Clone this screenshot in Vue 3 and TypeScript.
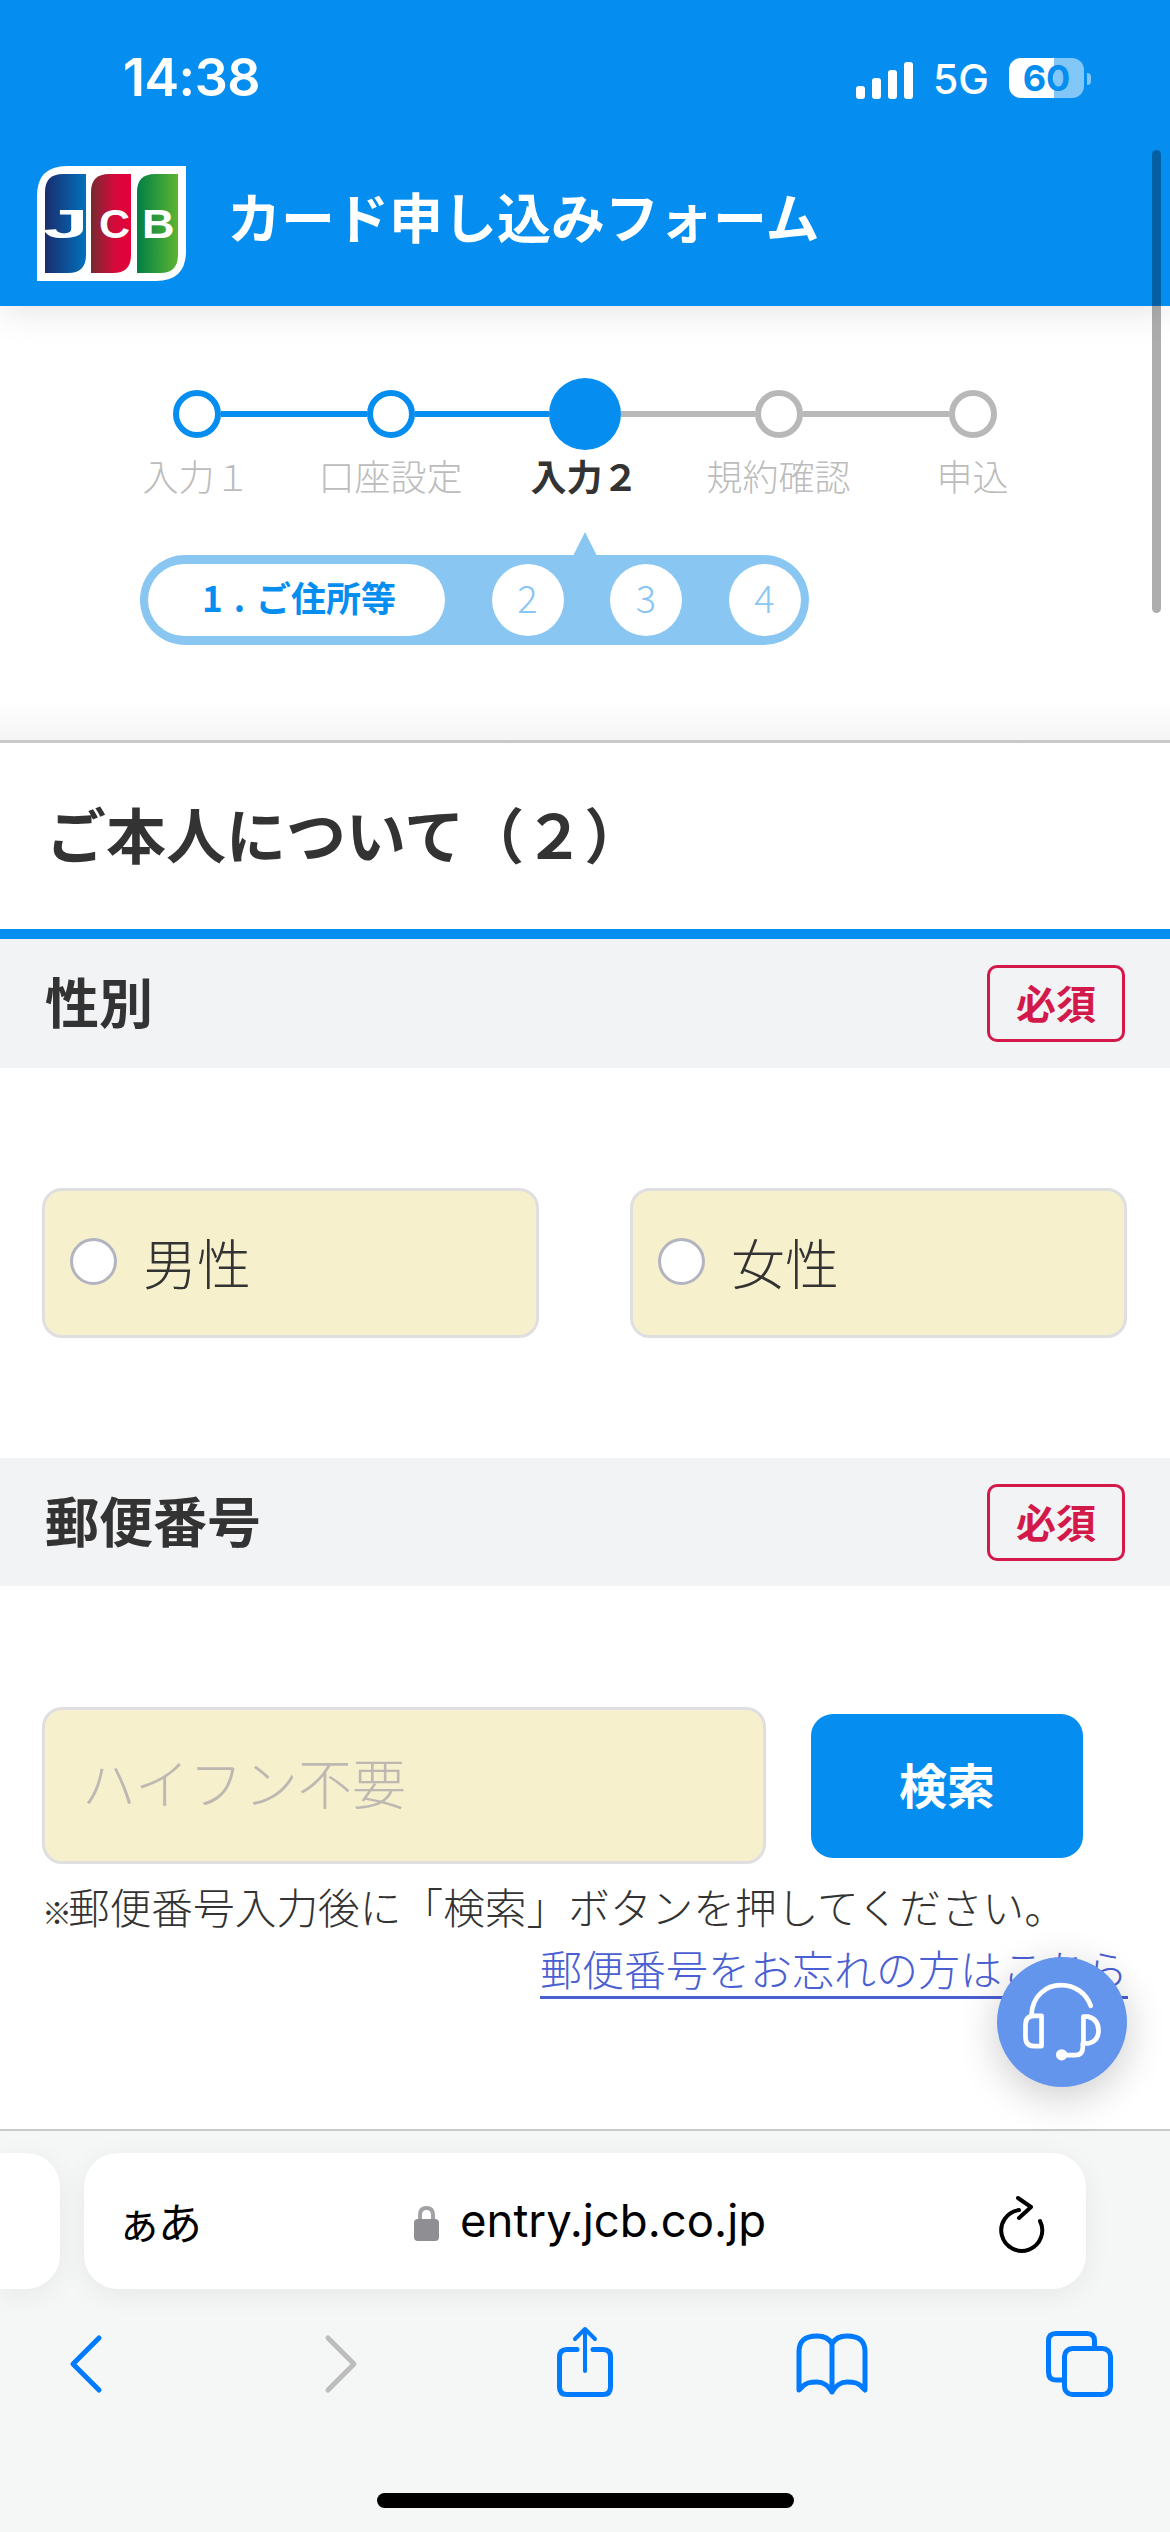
<script setup lang="ts">
interface Step { label: string; state: 'done' | 'current' | 'todo' }
const steps: Step[] = [
  { label: '入力１', state: 'done' },
  { label: '口座設定', state: 'done' },
  { label: '入力２', state: 'current' },
  { label: '規約確認', state: 'todo' },
  { label: '申込', state: 'todo' },
]
const signalBars = [13, 21, 29, 37]
</script>

<template>
  <div class="phone">
    <header class="top">
      <div class="status">
        <span class="time">14:38</span>
        <div class="status-right">
          <div class="signal">
            <i v-for="h in signalBars" :key="h" :style="{ height: h + 'px' }"></i>
          </div>
          <span class="net">5G</span>
          <div class="battery"><span>60</span></div>
          <i class="tip"></i>
        </div>
      </div>
      <div class="brand">
        <svg class="jcb" width="149" height="115" viewBox="0 0 149 115">
          <defs>
            <linearGradient id="gb" x1="0" x2="1" y1="0" y2="0"><stop offset="0" stop-color="#1b2c6e"/><stop offset="1" stop-color="#0071bc"/></linearGradient>
            <linearGradient id="gr" x1="0" x2="1" y1="0" y2="0"><stop offset="0" stop-color="#752b31"/><stop offset=".6" stop-color="#d6093b"/><stop offset="1" stop-color="#e4003a"/></linearGradient>
            <linearGradient id="gg" x1="0" x2="1" y1="0" y2="0"><stop offset="0" stop-color="#007f45"/><stop offset="1" stop-color="#5cb531"/></linearGradient>
          </defs>
          <path d="M30 0H149V85Q149 115 119 115H0V30Q0 0 30 0Z" fill="#fff"/>
          <path d="M26 8H49V89Q49 107 31 107H8V26Q8 8 26 8Z" fill="url(#gb)"/>
          <path d="M72 8H94V89Q94 107 76 107H54V26Q54 8 72 8Z" fill="url(#gr)"/>
          <path d="M118 8H141V89Q141 107 123 107H100V26Q100 8 118 8Z" fill="url(#gg)"/>
          <text class="jcb-t" transform="translate(6 72) scale(2 1)">J</text>
          <text class="jcb-t" transform="translate(62 72) scale(1.05 1)">C</text>
          <text class="jcb-t" transform="translate(105 72) scale(1.1 1)">B</text>
        </svg>
        <h1 class="title">カード申し込みフォーム</h1>
      </div>
    </header>

    <main class="main">
      <section class="progress">
        <ol class="steps">
          <li v-for="(s, i) in steps" :key="s.label" class="step" :class="s.state">
            <div class="track">
              <span class="seg" :class="{ none: i === 0, on: i <= 2 }"></span>
              <span class="dot"></span>
              <span class="seg" :class="{ none: i === steps.length - 1, on: i < 2 }"></span>
            </div>
            <span class="step-label">{{ s.label }}</span>
          </li>
        </ol>
        <div class="sub">
          <span class="sub-active">1 . ご住所等</span>
          <span class="sub-num">2</span>
          <span class="sub-num">3</span>
          <span class="sub-num">4</span>
        </div>
      </section>

      <h2 class="heading">ご本人について（２）</h2>

      <div class="field-head">
        <span class="field-name">性別</span>
        <em class="req">必須</em>
      </div>
      <div class="options">
        <label class="option"><span class="radio"></span>男性</label>
        <label class="option"><span class="radio"></span>女性</label>
      </div>

      <div class="field-head second">
        <span class="field-name">郵便番号</span>
        <em class="req">必須</em>
      </div>
      <div class="postal">
        <div class="postal-row">
          <input class="zip" type="text" placeholder="ハイフン不要" />
          <button class="search" type="button">検索</button>
        </div>
        <p class="note"><span class="mark">※</span>郵便番号入力後に「検索」ボタンを押してください。</p>
        <p class="link-row"><a class="link">郵便番号をお忘れの方はこちら</a></p>
      </div>

      <button class="fab" type="button" aria-label="チャット">
        <svg width="130" height="130" viewBox="112 52 388 388" fill="none" stroke="#fff" stroke-width="14" stroke-linecap="round" stroke-linejoin="round">
          <path d="M215 224C218 168 258 136 303 136C345 136 378 160 392 198"/>
          <path d="M245 228H222Q197 228 197 256V290Q197 318 222 318H245Z"/>
          <path d="M370 230H384Q415 238 415 272Q415 304 384 310H370Z"/>
          <path d="M368 310V322Q368 345 345 345H305"/>
          <circle cx="305" cy="344" r="17" fill="#fff" stroke="none"/>
        </svg>
      </button>
    </main>

    <footer class="toolbar">
      <div class="url-row">
        <div class="stub"></div>
        <div class="url-bar">
          <span class="aa">ぁあ</span>
          <svg class="lock" width="25" height="36" viewBox="0 0 25 36">
            <path d="M6 16V10Q6 3 12.500 3Q19 3 19 10V16" fill="none" stroke="#a2a2a6" stroke-width="4"/>
            <rect x="0" y="14" width="25" height="22" rx="4" fill="#8e8e93"/>
          </svg>
          <span class="url">entry.jcb.co.jp</span>
          <svg class="reload" width="50" height="60" viewBox="0 0 50 60" fill="none" stroke="#000" stroke-width="4" stroke-linecap="round" stroke-linejoin="round">
            <path d="M24 17A20.500 20.500 0 1 0 45 28"/>
            <path d="M23 5L36 14L24 25"/>
          </svg>
        </div>
      </div>
      <nav class="nav">
        <svg width="120" height="80" viewBox="0 0 120 80" fill="none" stroke="#007aff" stroke-width="5" stroke-linecap="round" stroke-linejoin="round"><path d="M70 16L44 42L70 68"/></svg>
        <svg width="120" height="80" viewBox="0 0 120 80" fill="none" stroke="#bdbdbd" stroke-width="5" stroke-linecap="round" stroke-linejoin="round"><path d="M51 16L77 42L51 68"/></svg>
        <svg width="120" height="80" viewBox="0 0 120 80" fill="none" stroke="#007aff" stroke-width="5" stroke-linecap="round" stroke-linejoin="round">
          <path d="M52 27.500H42Q34.500 27.500 34.500 35V65Q34.500 72.500 42 72.500H78Q85.500 72.500 85.500 65V35Q85.500 27.500 78 27.500H68"/>
          <path d="M60 7V49M50 17L60 7L70 17" stroke-width="4"/>
        </svg>
        <svg width="120" height="80" viewBox="0 0 120 80" fill="none" stroke="#007aff" stroke-width="5" stroke-linecap="round" stroke-linejoin="round">
          <path d="M59 22C56 16 50 14 44 14C33 14 26 18 26 30V68C32 60 38 60 44 60C50 60 56 64 59 70C62 64 68 60 74 60C80 60 86 60 92 68V30C92 18 85 14 74 14C68 14 62 16 59 22V70"/>
        </svg>
        <svg width="120" height="80" viewBox="0 0 120 80" fill="none" stroke="#007aff" stroke-width="5" stroke-linecap="round" stroke-linejoin="round">
          <rect x="43.500" y="26.500" width="46" height="46" rx="8"/>
          <path d="M41 58H35Q27.500 58 27.500 50V19Q27.500 11.500 35 11.500H66Q73.500 11.500 73.500 19V25"/>
        </svg>
      </nav>
      <div class="home"></div>
    </footer>

    <div class="scrollbar"></div>
  </div>
</template>

<style>
html, body { margin: 0; padding: 0; background: #fff; }
</style>

<style scoped>
* { box-sizing: border-box; }
.phone {
  position: relative;
  width: 1170px;
  height: 2532px;
  overflow: hidden;
  display: flex;
  flex-direction: column;
  background: #fff;
  color: #333;
  font-family: "Noto Sans CJK JP", "Noto Sans", sans-serif;
}

/* top */
.top {
  position: relative;
  z-index: 2;
  height: 306px;
  flex: none;
  background: #058eef;
  color: #fff;
  box-shadow: 0 2px 36px rgba(0, 0, 0, .13);
}
.status {
  height: 150px;
  padding: 50px 79px 0 123px;
  display: flex;
  justify-content: space-between;
  align-items: flex-start;
}
.time {
  font: 600 52px/56px Inter, "Liberation Sans", sans-serif;
  letter-spacing: -0.5px;
}
.status-right { display: flex; align-items: center; height: 56px; }
.signal { display: flex; align-items: flex-end; gap: 6.500px; height: 37px; margin-top: 4px; }
.signal i { display: block; width: 9.500px; background: #fff; border-radius: 3px; }
.net {
  font: 500 41px/56px Inter, "Liberation Sans", sans-serif;
  margin-left: 20px;
  margin-top: 2px;
}
.battery {
  width: 75px;
  height: 40px;
  margin-left: 20px;
  border-radius: 12px;
  background: linear-gradient(90deg, #fff 0 60%, rgba(255, 255, 255, .5) 60% 100%);
  color: #058eef;
  display: flex;
  align-items: center;
  justify-content: center;
  font: 700 36px/40px Inter, "Liberation Sans", sans-serif;
}
.tip {
  display: block;
  width: 4px;
  height: 12px;
  margin-left: 3px;
  margin-top: 1px;
  border-radius: 0 6px 6px 0;
  background: rgba(255, 255, 255, .5);
}
.brand { display: flex; align-items: flex-start; padding: 16px 0 0 37px; gap: 41px; }
.jcb { display: block; flex: none; }
.jcb-t { font: 700 41px "Liberation Sans", sans-serif; fill: #fff; }
.title {
  margin: 0;
  font-size: 54px;
  line-height: 76px;
  font-weight: 700;
  padding-top: 12px;
}

/* progress */
.main { position: relative; flex: 1; min-height: 0; }
.progress {
  height: 437px;
  padding: 72px 0 0 99.500px;
  border-bottom: 3px solid #c9c9c9;
  background: linear-gradient(#fff 0 396px, #f5f5f5 100%);
}
.steps {
  list-style: none;
  margin: 0;
  padding: 0;
  display: flex;
}
.step { width: 194px; display: flex; flex-direction: column; align-items: center; }
.track { width: 100%; height: 72px; display: flex; align-items: center; }
.seg { flex: 1; height: 6px; background: #b8b8b8; }
.seg.on { background: #058eef; }
.seg.none { background: transparent; }
.dot {
  flex: none;
  width: 48px;
  height: 48px;
  border-radius: 50%;
  border: 6px solid #b8b8b8;
  background: #fff;
}
.done .dot { border-color: #058eef; }
.current .dot { width: 72px; height: 72px; background: #058eef; border: 0; }
.step-label {
  margin-top: 4px;
  font-size: 36px;
  line-height: 42px;
  color: #bcbcbc;
  font-weight: 300;
  white-space: nowrap;
}
.current .step-label { color: #333; font-weight: 700; }

.sub {
  position: relative;
  width: 668.500px;
  height: 90px;
  margin: 59px 0 0 40.500px;
  padding: 9px 8px;
  border-radius: 45px;
  background: #89c6f2;
  display: flex;
  gap: 46.500px;
}
.sub::before {
  content: "";
  position: absolute;
  left: 433px;
  top: -23px;
  width: 24px;
  height: 24px;
  background: #89c6f2;
  clip-path: polygon(50% 0, 100% 100%, 0 100%);
}
.sub-active {
  width: 297px;
  height: 72px;
  padding-left: 5px;
  border-radius: 36px;
  background: #fff;
  color: #058eef;
  font-size: 35px;
  font-weight: 700;
  word-spacing: 3px;
  line-height: 65px;
  text-align: center;
  white-space: nowrap;
}
.sub-num {
  width: 72px;
  height: 72px;
  border-radius: 50%;
  background: #fff;
  color: #89c6f2;
  font-size: 38px;
  font-weight: 300;
  line-height: 66px;
  text-align: center;
}

/* headings */
.heading {
  margin: 0;
  height: 196px;
  padding-left: 46px;
  border-bottom: 10px solid #058eef;
  font-size: 60px;
  font-weight: 700;
  line-height: 180px;
  color: #333;
}
.field-head {
  height: 129px;
  background: #f1f3f5;
  padding: 0 45px 0 45px;
  display: flex;
  align-items: center;
  justify-content: space-between;
  font-size: 54px;
  font-weight: 700;
}
.second { height: 128px; }
.field-name { margin-bottom: 6px; }
.req {
  width: 138px;
  height: 77px;
  border: 3px solid #d3194a;
  border-radius: 10px;
  color: #d3194a;
  font-size: 40px;
  font-style: normal;
  font-weight: 700;
  line-height: 68px;
  text-align: center;
}

/* options */
.options {
  padding: 120px 43px 120px 42px;
  display: grid;
  grid-template-columns: 497px 497px;
  column-gap: 91px;
}
.option {
  height: 150px;
  padding: 0 0 4px 25px;
  border: 3px solid #dfdfe2;
  border-radius: 20px;
  background: #f6f0cd;
  display: flex;
  align-items: center;
  gap: 26px;
  font-size: 54px;
  font-weight: 300;
}
.radio {
  width: 47px;
  height: 47px;
  border-radius: 50%;
  border: 3px solid #b2b5c0;
  background: #fff;
}

/* postal */
.postal { padding: 121px 42px 0; }
.postal-row { display: flex; align-items: center; gap: 45px; }
.zip {
  width: 724px;
  height: 157px;
  padding: 0 0 8px 37px;
  border: 3px solid #dfdfe2;
  border-radius: 20px;
  background: #f6f0cd;
  font-family: inherit;
  font-size: 54px;
  font-weight: 300;
  outline: none;
}
.zip::placeholder { color: #bdb9b2; opacity: 1; }
.search {
  width: 272px;
  height: 144px;
  padding: 0 0 6px;
  border: 0;
  border-radius: 22px;
  background: #058eef;
  color: #fff;
  font-family: inherit;
  font-size: 48px;
  font-weight: 700;
}
.note {
  margin: 12px 0 0;
  font-size: 41.700px;
  line-height: 60px;
  font-weight: 300;
  white-space: nowrap;
  color: #333;
}
.mark { display: inline-block; width: 26px; font-size: 30px; font-weight: 700; }
.link-row { margin: -3px 0 0; text-align: right; line-height: 60px; font-size: 42px; }
.link {
  color: #4a5fd1;
  font-weight: 300;
  text-decoration: underline;
  text-underline-offset: 10px;
  text-decoration-thickness: 3px;
}
.fab {
  position: absolute;
  left: 997px;
  top: 1651px;
  width: 130px;
  height: 130px;
  padding: 0;
  border: 0;
  border-radius: 50%;
  background: #6495ed;
  box-shadow: 0 10px 40px rgba(0, 0, 0, .2);
}
.fab svg { display: block; }

/* toolbar */
.toolbar {
  flex: none;
  height: 403px;
  background: #f5f6f6;
  border-top: 2px solid #c8c8c8;
}
.url-row { display: flex; gap: 24px; padding-top: 22px; }
.stub {
  width: 60px;
  height: 136px;
  flex: none;
  background: #fff;
  border-radius: 0 34px 34px 0;
  box-shadow: 0 6px 28px rgba(0, 0, 0, .06);
}
.url-bar {
  width: 1002px;
  height: 136px;
  flex: none;
  padding: 0 41px 0 33px;
  background: #fff;
  border-radius: 34px;
  box-shadow: 0 6px 28px rgba(0, 0, 0, .06);
  display: flex;
  align-items: center;
  color: #000;
}
.aa { width: 81px; font-size: 44px; letter-spacing: -3px; line-height: 50px; white-space: nowrap; }
.lock { margin-left: 216px; margin-top: 4px; flex: none; }
.url {
  margin-left: 21px;
  font: 400 45.500px/60px Inter, "Liberation Sans", sans-serif;
  white-space: nowrap;
}
.reload { margin-left: auto; flex: none; margin-top: 4px; }
.nav { display: flex; gap: 128px; padding: 33px 0 0 29px; }
.nav svg { display: block; flex: none; }
.home {
  width: 417px;
  height: 15px;
  margin: 91px auto 0;
  border-radius: 8px;
  background: #000;
}
.scrollbar {
  position: absolute;
  z-index: 3;
  left: 1152px;
  top: 150px;
  width: 9px;
  height: 463px;
  border-radius: 5px;
  background: rgba(0, 0, 0, .32);
}
</style>
